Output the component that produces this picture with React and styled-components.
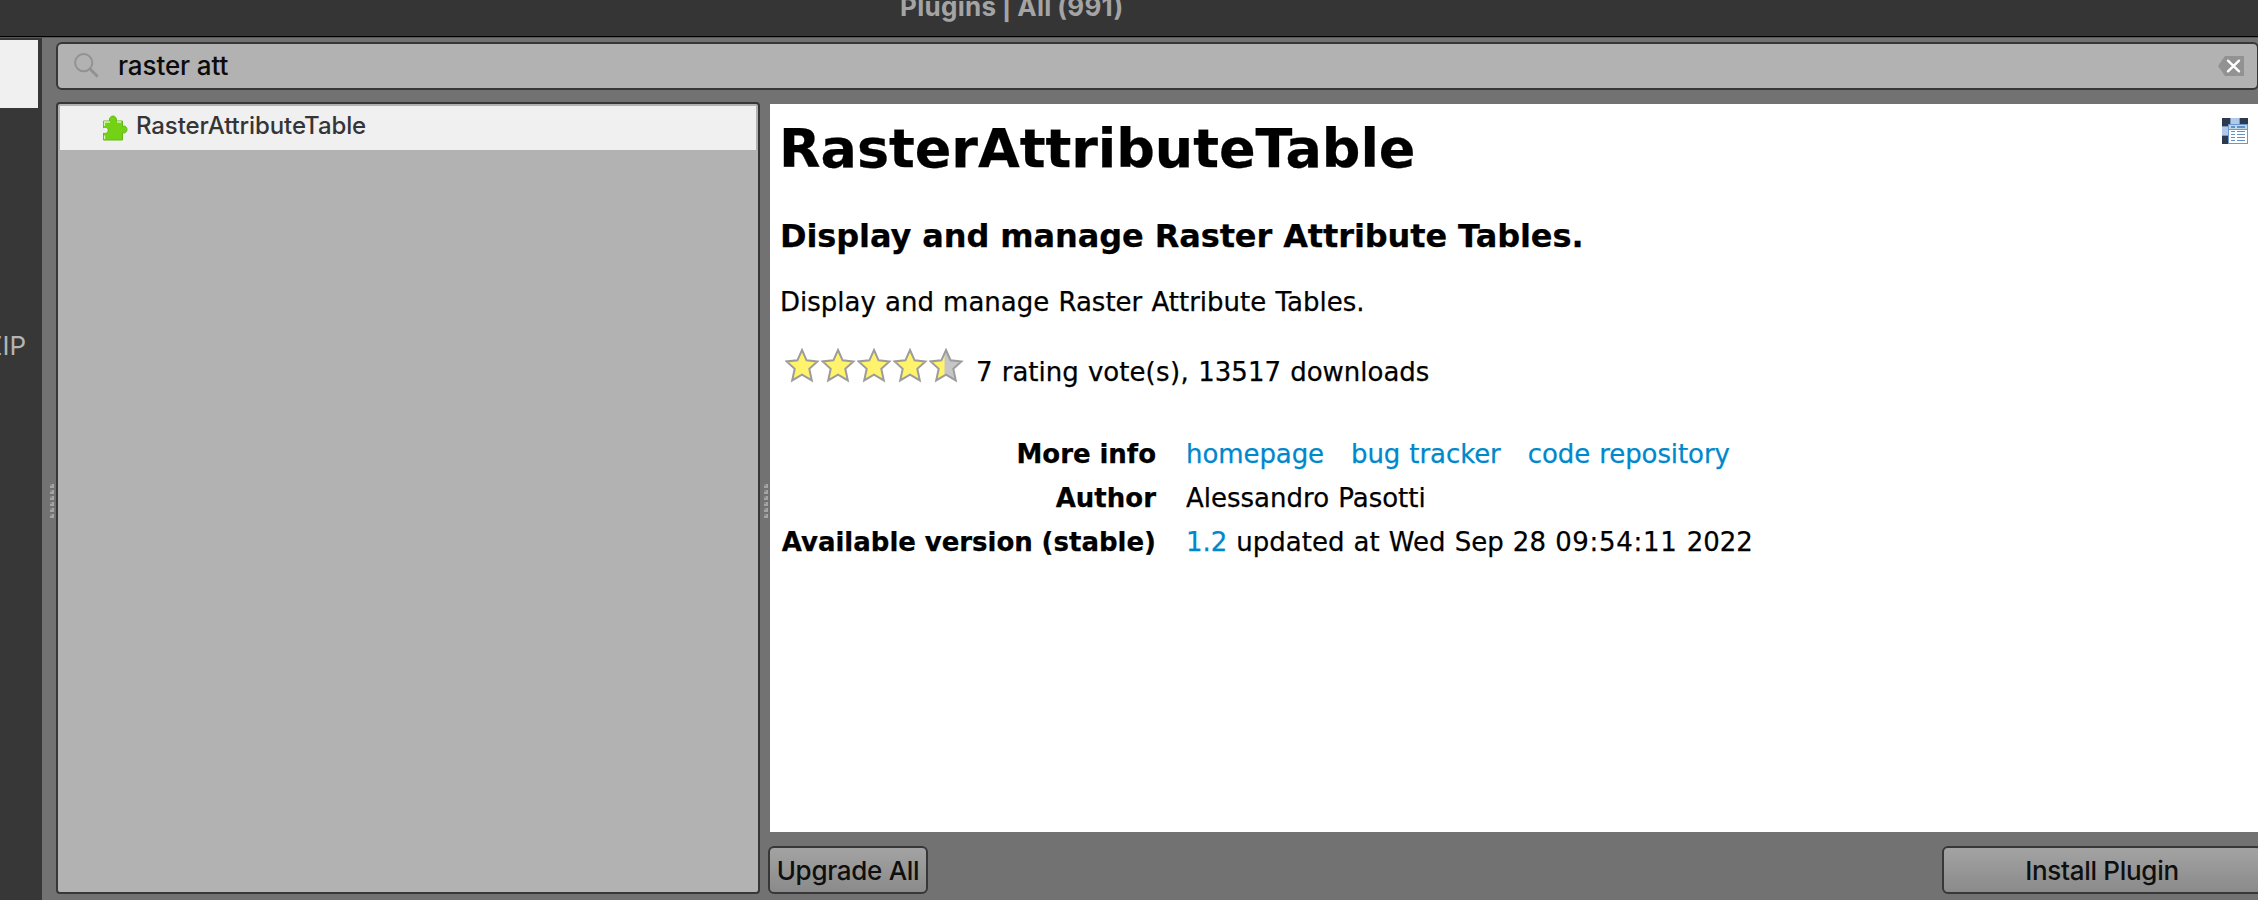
import React from "react";
import styled, { createGlobalStyle } from "styled-components";

const UI_FONT = 'Inter, "Liberation Sans", sans-serif';
const DOC_FONT = '"DejaVu Sans", sans-serif';

const GlobalStyle = createGlobalStyle`
  * { box-sizing: border-box; }
  html, body { margin: 0; padding: 0; overflow: hidden; }
  body { font-family: ${UI_FONT}; }
  h1, h2, p { margin: 0; }
`;

const Window = styled.div`
  width: 100vw;
  height: 900px;
  display: flex;
  flex-direction: column;
  overflow: hidden;
  background: #727272;
`;

const TitleBar = styled.header`
  flex: none;
  height: 38px;
  padding-left: 900px;
  overflow: hidden;
  background: #353535;
  border-bottom: 1px solid #585858;
  box-shadow: inset 0 -1px 0 #000;
  color: #a4a4a4;
  font-size: 26px;
  font-weight: 700;
  line-height: 32px;
  letter-spacing: 0.3px;
  word-spacing: -1px;
  white-space: pre;
`;

const TitleText = styled.div`
  margin-top: -9px;
`;

const Body = styled.div`
  flex: 1;
  min-height: 0;
  display: flex;
`;

const Sidebar = styled.nav`
  flex: none;
  width: 42px;
  padding-top: 2px;
  overflow: hidden;
  background: #373737;
`;

const SidebarItem = styled.div`
  width: 38px;
  height: ${(p) => p.$height}px;
  display: flex;
  align-items: center;
  justify-content: flex-end;
  padding-right: 12px;
  background: ${(p) => (p.$selected ? "#f0f0f0" : "transparent")};
  color: #b4b4b4;
  font-size: 26px;
  line-height: 32px;
  white-space: nowrap;
`;

const SidebarGap = styled.div`
  height: 204px;
`;

const Grip = styled.div`
  flex: none;
  width: ${(p) => p.$width}px;
  height: ${(p) => p.$height}px;
  padding: ${(p) => p.$top}px 0 0 ${(p) => p.$left}px;
  display: flex;
  flex-direction: column;
  gap: 2px;
`;

const GripDot = styled.i`
  width: 4px;
  height: 4px;
  background: linear-gradient(#868686, #868686) 0 0 / 2px 2px no-repeat #a4a4a4;
`;

const Main = styled.main`
  flex: none;
  width: 2204px;
  padding: 4px 0 6px;
  display: flex;
  flex-direction: column;
  gap: 12px;
`;

const SearchField = styled.div`
  flex: none;
  width: 2203px;
  height: 48px;
  padding: 0 13px 0 16px;
  display: flex;
  align-items: center;
  background: #b2b2b2;
  border: 2px solid #373737;
  border-radius: 6px;
`;

const SearchText = styled.span`
  flex: 1;
  margin-left: 18px;
  color: #0b0b0b;
  font-size: 26px;
  font-weight: 500;
  line-height: 32px;
  letter-spacing: -0.1px;
`;

const Columns = styled.div`
  flex: 1;
  min-height: 0;
  display: flex;
`;

const PluginList = styled.div`
  flex: none;
  width: 704px;
  padding: 2px;
  background: #b2b2b2;
  border: 2px solid #373737;
  border-radius: 4px;
`;

const PluginRow = styled.div`
  height: 44px;
  padding: 0 0 0 42px;
  display: flex;
  align-items: center;
  gap: 7px;
  background: #f0f0f0;
  color: #353535;
  font-size: 24px;
  font-weight: 500;
  line-height: 30px;
  letter-spacing: -0.1px;
`;

const RowLabel = styled.span`
  margin-top: -4px;
`;

const Details = styled.section`
  flex: none;
  width: 1494px;
  display: flex;
  flex-direction: column;
`;

const Page = styled.article`
  flex: none;
  width: 1490px;
  height: 728px;
  margin: 2px 0 14px 2px;
  padding: 14px 12px 0 10px;
  display: flex;
  justify-content: space-between;
  align-items: flex-start;
  background: #fff;
  color: #000;
  font-family: ${DOC_FONT};
  font-size: 26px;
  line-height: 30px;
  word-spacing: 0.9px;
  white-space: nowrap;
  -webkit-text-stroke: 0.25px currentColor;
`;

const Heading = styled.h1`
  margin-top: -1px;
  margin-left: -1px;
  font-size: 54px;
  line-height: 64px;
  letter-spacing: -0.05px;
  word-spacing: 0;
`;

const Subheading = styled.h2`
  margin-top: 36px;
  font-size: 32px;
  line-height: 38px;
  letter-spacing: -0.1px;
  word-spacing: 0;
`;

const Paragraph = styled.p`
  margin-top: 32px;
`;

const Rating = styled.div`
  margin-top: 31px;
  display: flex;
  align-items: flex-start;
`;

const StarRow = styled.div`
  width: 196px;
  padding-left: 5px;
  display: flex;
`;

const RatingText = styled.span`
  margin-top: 9px;
`;

const Loose = styled.span`
  letter-spacing: ${(p) => p.$by}px;
`;

const Facts = styled.dl`
  margin: 45px 0 0;
  display: grid;
  grid-template-columns: 376px auto;
  column-gap: 30px;
  grid-auto-rows: 44px;
  align-items: center;
`;

const FactName = styled.dt`
  text-align: right;
  font-weight: 700;
  word-spacing: -0.3px;
`;

const FactValue = styled.dd`
  margin: 0;
  display: flex;
  gap: ${(p) => p.$gap || 0}px;
  white-space: pre;
`;

const Link = styled.a`
  color: #0088cc;
  letter-spacing: -0.08px;
`;

const PluginLogo = styled.svg`
  flex: none;
`;

const Actions = styled.footer`
  display: flex;
  justify-content: space-between;
`;

const PushButton = styled.button`
  width: ${(p) => p.$width}px;
  height: 48px;
  padding: 2px 0 0;
  background: linear-gradient(#a3a3a3, #8a8a8a);
  border: 2px solid #373737;
  border-radius: 6px;
  color: #0f0f0f;
  font-family: ${UI_FONT};
  font-size: 26px;
  font-weight: 500;
  line-height: 32px;
  letter-spacing: -0.3px;
  text-align: center;
  white-space: nowrap;
`;

const STAR = "M17 2 L21.6 12.3 L32.4 13.4 L24.3 20.8 L26.8 32.4 L17 26.6 L7.2 32.4 L9.7 20.8 L1.6 13.4 L12.4 12.3 Z";

function Star({ half }) {
  return (
    <svg width="36" height="35" viewBox="0 0 36 35">
      <path d={STAR} fill={half ? "#c6c6c6" : "#fff36b"} />
      {half && (
        <path d="M17 2 L12.4 12.3 L1.6 13.4 L9.7 20.8 L7.2 32.4 L15.5 27.5 L15.5 5 Z" fill="#fff36b" />
      )}
      <path d={STAR} fill="none" stroke="#9c9c9c" strokeWidth="2" />
    </svg>
  );
}

function SearchIcon() {
  return (
    <svg width="26" height="26" viewBox="0 0 26 26" fill="none" stroke="#929292">
      <circle cx="9.7" cy="9.7" r="8.6" strokeWidth="2" />
      <path d="M16 16 L22.8 22.8" strokeWidth="3" strokeLinecap="round" />
    </svg>
  );
}

function ClearIcon() {
  return (
    <svg width="26" height="20" viewBox="0 0 26 20">
      <path d="M0 10 L7 0 H26 V20 H7 Z" fill="#929292" />
      <path d="M10 4.7 L21 15.3 M21 4.7 L10 15.3" stroke="#fff" strokeWidth="2.4" strokeLinecap="round" />
    </svg>
  );
}

function PuzzleIcon() {
  return (
    <svg width="27" height="26" viewBox="0 0 27 26">
      <path
        d="M1.5 6 H7.5 C7 3.5 8.5 1 11 1 C13.5 1 15 3.5 14.2 6 H20.5 V11.5 C23 10.2 25 12 25 14.5 C25 17 23 18.8 20.5 17.6 V25 H1.5 V18.2 C4 19.2 6.2 17.6 6.2 15.4 C6.2 13 4 11.6 1.5 12.8 Z"
        fill="#73d216"
        stroke="#5fbc0c"
        strokeWidth="1"
      />
      <path d="M2.5 11 V7 H8 M15 7 H19.3 M2.6 20.5 V24" fill="none" stroke="#d5f3b4" strokeWidth="1.3" />
    </svg>
  );
}

function Logo() {
  return (
    <PluginLogo width="26" height="26" viewBox="0 0 26 26">
      <rect width="26" height="26" fill="#2c3a4f" />
      <rect x="8" width="10" height="8" fill="#8496ad" />
      <rect x="9" width="8" height="8" fill="#b0c9e8" />
      <rect y="8" width="8" height="10" fill="#8496ad" />
      <rect y="9" width="6" height="8" fill="#b0c9e8" />
      <rect x="6" y="6" width="20" height="20" fill="#6c98cf" />
      <rect x="7" y="7" width="18" height="4" fill="#b8d8ec" />
      <rect x="7" y="12" width="18" height="13" fill="#fff" />
      <path d="M9 9 H13 M15 9 H23" stroke="#6191c6" strokeWidth="2" />
      <path d="M9 13.5 H13 M15 13.5 H23 M9 16.5 H13 M15 16.5 H23 M9 19.5 H13 M15 19.5 H23 M9 22.5 H13 M15 22.5 H23" stroke="#6191c6" />
    </PluginLogo>
  );
}

function Splitter(props) {
  return (
    <Grip {...props}>
      {[0, 1, 2, 3, 4, 5].map((i) => (
        <GripDot key={i} />
      ))}
    </Grip>
  );
}

export default function App() {
  return (
    <Window>
      <GlobalStyle />
      <TitleBar>
        <TitleText>Plugins | All (991)</TitleText>
      </TitleBar>
      <Body>
        <Sidebar>
          <SidebarItem $selected $height={68} />
          <SidebarGap />
          <SidebarItem $height={68}>Install from ZIP</SidebarItem>
        </Sidebar>
        <Splitter $width={14} $height={482} $top={446} $left={8} />
        <Main>
          <SearchField>
            <SearchIcon />
            <SearchText>raster att</SearchText>
            <ClearIcon />
          </SearchField>
          <Columns>
            <PluginList>
              <PluginRow>
                <PuzzleIcon />
                <RowLabel>RasterAttributeTable</RowLabel>
              </PluginRow>
            </PluginList>
            <Splitter $width={8} $height={418} $top={382} $left={4} />
            <Details>
              <Page>
                <div>
                  <Heading>RasterAttributeTable</Heading>
                  <Subheading>Display and manage Raster Attribute Tables.</Subheading>
                  <Paragraph>Display and manage Raster Attribute Tables.</Paragraph>
                  <Rating>
                    <StarRow>
                      <Star />
                      <Star />
                      <Star />
                      <Star />
                      <Star half />
                    </StarRow>
                    <RatingText>
                      7 rating vote<Loose $by={0.4}>(s),</Loose> 13517 downloads
                    </RatingText>
                  </Rating>
                  <Facts>
                    <FactName>More info</FactName>
                    <FactValue $gap={27}>
                      <Link>homepage</Link>
                      <Link>bug tracker</Link>
                      <Link>code repository</Link>
                    </FactValue>
                    <FactName>Author</FactName>
                    <FactValue>Alessandro Pasotti</FactValue>
                    <FactName>Available version (stable)</FactName>
                    <FactValue>
                      <Link>1.2</Link> updated at Wed Sep 28 <Loose $by={0.7}>09:54:11</Loose> 2022
                    </FactValue>
                  </Facts>
                </div>
                <Logo />
              </Page>
              <Actions>
                <PushButton $width={160}>Upgrade All</PushButton>
                <PushButton $width={320}>Install Plugin</PushButton>
              </Actions>
            </Details>
          </Columns>
        </Main>
      </Body>
    </Window>
  );
}
